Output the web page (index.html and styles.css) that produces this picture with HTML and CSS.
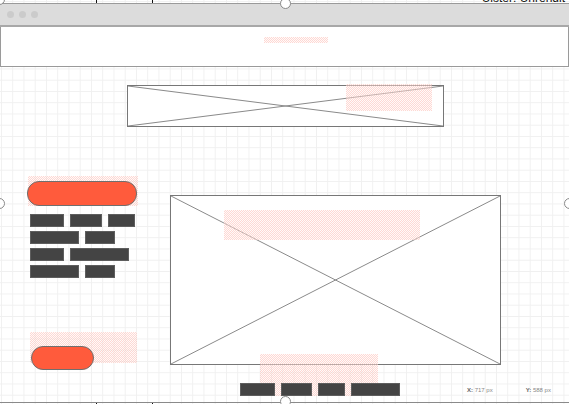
FILE: index.html
```html
<!DOCTYPE html>
<html>
<head>
<meta charset="utf-8">
<link rel="stylesheet" href="styles.css">
</head>
<body>
<div class="canvas">
  <div class="ruler-top">
    <span class="tick t1"></span><span class="tick t2"></span>
    <span class="cut-text">Ulster: Unrendit</span>
  </div>
  <div class="window">
    <div class="titlebar">
      <span class="dot"></span><span class="dot"></span><span class="dot"></span>
    </div>
    <div class="header">
      <div class="hatch h-header"></div>
    </div>
  </div>
  <div class="main">
    <div class="placeholder banner">
      <svg class="cross" viewBox="0 0 100 100" preserveAspectRatio="none"><line x1="0" y1="0" x2="100" y2="100"/><line x1="100" y1="0" x2="0" y2="100"/></svg>
      <div class="hatch h-banner"></div>
    </div>
    <div class="row">
      <div class="sidebar">
        <div class="cta">
          <div class="hatch h-cta"></div>
          <div class="pill pill-lg"></div>
        </div>
        <div class="blocks">
          <div class="brow"><span class="blk" style="width:34px"></span><span class="blk" style="width:32px"></span><span class="blk" style="width:27px"></span></div>
          <div class="brow"><span class="blk" style="width:49px"></span><span class="blk" style="width:30px"></span></div>
          <div class="brow"><span class="blk" style="width:34px"></span><span class="blk" style="width:59px"></span></div>
          <div class="brow"><span class="blk" style="width:49px"></span><span class="blk" style="width:30px"></span></div>
        </div>
        <div class="cta2">
          <div class="hatch h-cta2"></div>
          <div class="pill pill-sm"></div>
        </div>
      </div>
      <div class="placeholder bigimg">
        <svg class="cross" viewBox="0 0 100 100" preserveAspectRatio="none"><line x1="0" y1="0" x2="100" y2="100"/><line x1="100" y1="0" x2="0" y2="100"/></svg>
        <div class="hatch h-big1"></div>
        <div class="hatch h-big2"></div>
      </div>
    </div>
    <div class="footer">
      <div class="nav">
        <span class="blk" style="width:35px"></span>
        <span class="blk" style="width:31px"></span>
        <span class="blk" style="width:27px"></span>
        <span class="blk" style="width:49px"></span>
      </div>
      <span class="coord cx"><b>X:</b> 717 px</span>
      <span class="coord cy"><b>Y:</b> 588 px</span>
    </div>
  </div>
  <div class="ruler-bottom">
    <span class="tick t1"></span><span class="tick t2"></span>
  </div>
  <span class="handle hd-top"></span>
  <span class="handle hd-tl"></span>
  <span class="handle hd-left"></span>
  <span class="handle hd-right"></span>
  <span class="handle hd-bottom"></span>
</div>
</body>
</html>
```
FILE: styles.css
```css
* { box-sizing: border-box; }
html, body { margin: 0; padding: 0; }
body {
  width: 569px;
  height: 404px;
  overflow: hidden;
  font-family: "Liberation Sans", Arial, sans-serif;
  background-color: #fff;
  background-image:
    linear-gradient(to right, #f0f0f0 1px, transparent 1px),
    linear-gradient(to bottom, #f0f0f0 1px, transparent 1px);
  background-size: 11.25px 11.25px;
  background-position: 1px 1px;
}
.canvas {
  position: relative;
  width: 569px;
  height: 404px;
}
.ruler-top {
  position: relative;
  height: 3px;
}
.tick {
  position: absolute;
  width: 1px;
  background: #111;
}
.ruler-top .tick { top: 0; height: 3px; }
.t1 { left: 96px; }
.t2 { left: 152px; }
.cut-text {
  position: absolute;
  right: 4px;
  top: -8px;
  font-size: 12px;
  line-height: 12px;
  color: #111;
}
.window {
  border-top: 1px solid #9a9a9a;
}
.titlebar {
  height: 23px;
  background: #dcdcdc;
  border-bottom: 2px solid #a8a8a8;
  display: flex;
  align-items: center;
  gap: 5px;
  padding: 0 0 0 7px;
}
.dot {
  width: 7px;
  height: 7px;
  border-radius: 50%;
  background: #cbcbcb;
}
.header {
  position: relative;
  height: 40px;
  background: #fff;
  border: 1px solid #9a9a9a;
  border-top: none;
}
.hatch {
  position: absolute;
  background-color: rgba(255, 242, 240, 0.4);
  background-image: repeating-conic-gradient(rgba(252, 170, 160, 0.42) 0 25%, transparent 0 50%);
  background-size: 2px 2px;
}
.h-header { left: 263px; top: 10px; width: 64px; height: 6px; }
.main {
  padding-top: 18px;
}
.placeholder {
  position: relative;
  background: #fff;
  border: 1px solid #777;
}
.cross {
  position: absolute;
  inset: 0;
  width: 100%;
  height: 100%;
}
.cross line {
  stroke: #8a8a8a;
  stroke-width: 1;
  vector-effect: non-scaling-stroke;
}
.banner {
  margin-left: 127px;
  width: 317px;
  height: 42px;
}
.h-banner { left: 218px; top: -2px; width: 86px; height: 27px; }
.row {
  display: flex;
  margin-top: 49px;
}
.sidebar {
  margin-left: 27px;
  width: 111px;
  height: 194px;
  display: flex;
  flex-direction: column;
}
.cta {
  position: relative;
  height: 30px;
}
.h-cta { left: 1px; top: 0; width: 110px; height: 30px; }
.pill {
  position: relative;
  background: #ff5b3c;
  border: 1px solid #6f6f6f;
}
.pill-lg {
  margin-top: 5px;
  width: 110px;
  height: 25px;
  border-radius: 12px;
}
.blocks {
  margin-top: 8px;
  padding-left: 3px;
  display: flex;
  flex-direction: column;
  gap: 4px;
}
.brow {
  display: flex;
  gap: 6px;
}
.blk {
  display: block;
  height: 13px;
  background: #444;
  border: 1px solid #5e5e5e;
}
.cta2 {
  position: relative;
  margin-top: auto;
  height: 38px;
}
.h-cta2 { left: 3px; top: 0; width: 107px; height: 31px; }
.pill-sm {
  margin-top: 14px;
  margin-left: 4px;
  width: 63px;
  height: 24px;
  border-radius: 12px;
}
.bigimg {
  margin-left: 32px;
  margin-top: 19px;
  width: 331px;
  height: 170px;
}
.h-big1 { left: 53px; top: 14px; width: 196px; height: 30px; }
.h-big2 { left: 89px; top: 158px; width: 118px; height: 42px; }
.footer {
  position: relative;
  z-index: 1;
  display: flex;
  align-items: center;
  margin-top: 13px;
  height: 13px;
}
.nav {
  display: flex;
  gap: 6px;
  margin-left: 240px;
}
.coord {
  font-size: 6px;
  color: #888;
  white-space: nowrap;
}
.coord b { color: #666; }
.cx { margin-left: 67px; }
.cy { margin-left: 33px; }
.ruler-bottom {
  position: relative;
  margin-top: 6px;
  border-top: 1px solid #8a8a8a;
  height: 3px;
}
.ruler-bottom .tick { top: 0; height: 3px; }
.handle {
  position: absolute;
  width: 11px;
  height: 11px;
  border-radius: 50%;
  background: #fff;
  border: 1.5px solid #8a8a8a;
}
.hd-top { left: 280px; top: -2px; }
.hd-tl { left: -6px; top: -6px; }
.hd-left { left: -6px; top: 198px; }
.hd-right { left: 564px; top: 198px; }
.hd-bottom { left: 280px; top: 396px; }
```
